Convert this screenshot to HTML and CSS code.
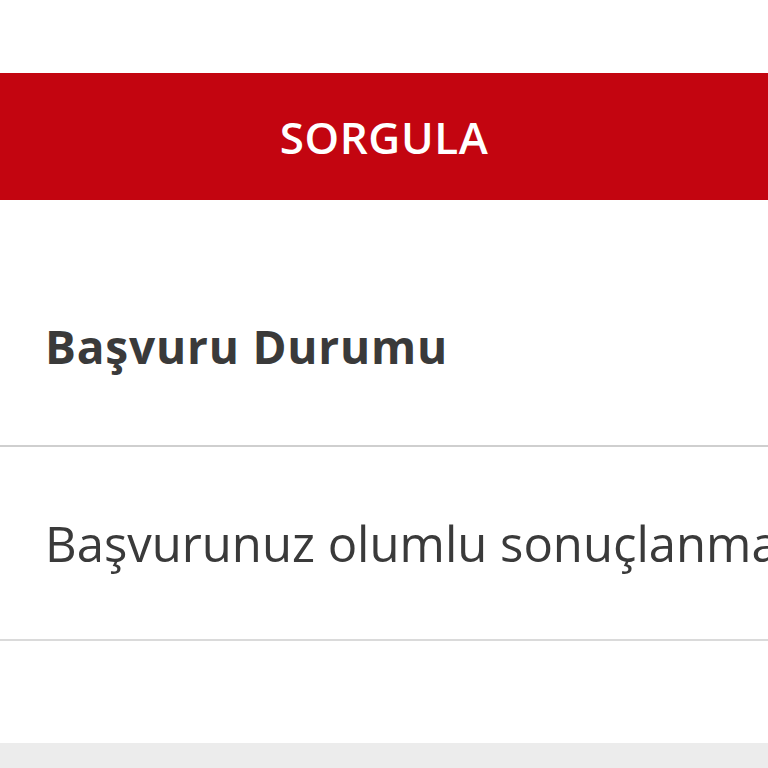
FILE: index.html
```html
<!DOCTYPE html>
<html lang="tr">
<head>
  <meta charset="UTF-8" />
  <meta name="viewport" content="width=device-width, initial-scale=1.0" />
  <title>Başvuru Sorgulama</title>
  <link rel="stylesheet" href="styles.css">
</head>
<body>
  <div class="page">
    <button class="query-btn" type="button">SORGULA</button>

    <section class="result">
      <h2 class="result-title">Başvuru Durumu</h2>
      <p class="result-status">Başvurunuz olumlu sonuçlanmamıştır.</p>
    </section>
  </div>

  <footer class="footer"></footer>
</body>
</html>
```
FILE: styles.css
```css
html, body {
  margin: 0;
  padding: 0;
  background: #ffffff;
  color: #3a3a3a;
  font-family: 'Open Sans', 'DejaVu Sans', sans-serif;
  overflow: hidden;
}

.page {
  padding-top: 73px;
}

.query-btn {
  display: block;
  width: 100%;
  height: 127px;
  margin: 0;
  border: none;
  background: #c30510;
  color: #ffffff;
  font-family: inherit;
  font-size: 44px;
  font-weight: 600;
  letter-spacing: 0.6px;
}

.result {
  display: flex;
  flex-direction: column;
}

.result-title {
  margin: 0;
  height: 247px;
  display: flex;
  align-items: center;
  padding: 46px 45px 0;
  box-sizing: border-box;
  font-size: 46px;
  font-weight: 700;
  letter-spacing: 0.8px;
  color: #3a3a3a;
  border-bottom: 2px solid #cfcfcf;
}

.result-status {
  margin: 0;
  height: 194px;
  display: flex;
  align-items: center;
  padding: 0 45px;
  box-sizing: border-box;
  font-size: 49px;
  white-space: nowrap;
  overflow: hidden;
  border-bottom: 2px solid #dadada;
}

.footer {
  margin-top: 102px;
  height: 40px;
  background: #ececec;
}
```
